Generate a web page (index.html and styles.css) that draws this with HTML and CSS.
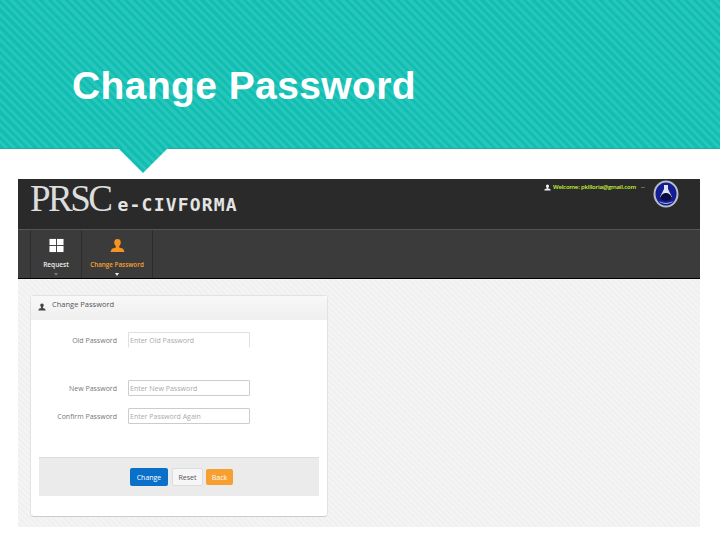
FILE: index.html
```html
<!DOCTYPE html>
<html lang="en">
<head>
  <meta charset="UTF-8" />
  <title>Change Password</title>
  <link rel="stylesheet" href="styles.css">
</head>
<body>
  <header class="banner">
    <h1>Change Password</h1>
    <div class="notch"></div>
  </header>

  <main class="shot">
    <div class="topbar">
      <div class="logo">
        <span class="logo-prsc">PRSC</span>
        <span class="logo-name">e-CIVFORMA</span>
      </div>
      <div class="welcome">
        <svg class="user-icon" viewBox="0 0 16 16"><path d="M8 1c2.500 0 3.500 1.700 3.500 3.700 0 1.600-.7 3-1.700 3.800v1.500L14 11.500 15.500 15H.5L2 11.500 6.200 10V8.500C5.200 7.700 4.500 6.300 4.500 4.700 4.500 2.700 5.500 1 8 1z"/></svg>
        <span>Welcome: pkllloria@gmail.com</span>
        <span class="caret-small"></span>
      </div>
      <svg class="seal" viewBox="0 0 26 28">
        <ellipse cx="13" cy="14" rx="12.500" ry="13.500" fill="#b9bec9"/>
        <ellipse cx="13" cy="14" rx="10.500" ry="11.500" fill="#141c96"/>
        <path d="M11 5h4v4l4 8c-1 3-11 3-12 0l4-8z" fill="#dfe4f0"/>
        <path d="M7 18c1.500-4 4-5 6-5s4.500 1 6 5c-2 3.500-10 3.500-12 0z" fill="#0a0c40"/>
        <path d="M6 21c3 2.500 11 2.500 14 0-2 3.500-12 3.500-14 0z" fill="#e8ecf4"/>
      </svg>
    </div>

    <nav class="menu">
      <div class="menu-item">
        <svg class="menu-icon" viewBox="0 0 16 16" fill="#fff"><rect x="0.500" y="1" width="7" height="6.500"/><rect x="8.500" y="1" width="7" height="6.500"/><rect x="0.500" y="8.500" width="7" height="6.500"/><rect x="8.500" y="8.500" width="7" height="6.500"/></svg>
        <span>Request</span>
        <i class="caret caret-dim"></i>
      </div>
      <div class="menu-item active">
        <svg class="menu-icon" viewBox="0 0 16 16" fill="#f7931e"><path d="M8 1c2.500 0 3.500 1.700 3.500 3.700 0 1.600-.7 3-1.700 3.800v1.500L14 11.500 15.500 15H.5L2 11.500 6.200 10V8.500C5.200 7.700 4.500 6.300 4.500 4.700 4.500 2.700 5.500 1 8 1z"/></svg>
        <span>Change Password</span>
        <i class="caret"></i>
      </div>
    </nav>

    <section class="content">
      <div class="card">
        <div class="card-head">
          <svg class="head-icon" viewBox="0 0 16 16"><path d="M8 1c2.500 0 3.500 1.700 3.500 3.700 0 1.600-.7 3-1.700 3.800v1.500L14 11.500 15.500 15H.5L2 11.500 6.200 10V8.500C5.200 7.700 4.500 6.300 4.500 4.700 4.500 2.700 5.500 1 8 1z"/></svg>
          <span>Change Password</span>
        </div>
        <form class="card-body">
          <div class="row row-old">
            <label>Old Password</label>
            <input type="text" placeholder="Enter Old Password" />
          </div>
          <div class="row row-new">
            <label>New Password</label>
            <input type="text" placeholder="Enter New Password" />
          </div>
          <div class="row row-confirm">
            <label>Confirm Password</label>
            <input type="text" placeholder="Enter Password Again" />
          </div>
          <div class="actions">
            <button type="button" class="btn btn-blue">Change</button>
            <button type="button" class="btn btn-plain">Reset</button>
            <button type="button" class="btn btn-orange">Back</button>
          </div>
        </form>
      </div>
    </section>
  </main>
</body>
</html>
```

FILE: styles.css
```css
body {
  margin: 0;
  height: 540px;
  overflow: hidden;
  background: #fff;
  font-family: "Open Sans", "Liberation Sans", sans-serif;
}
.banner {
  position: relative;
  height: 149px;
  padding-left: 72px;
  box-sizing: border-box;
  background: repeating-linear-gradient(45deg, #12beb2 0, #12beb2 3px, #27c6bb 3px, #27c6bb 6px);
  border-bottom: 1px solid #2aa99f;
}
.banner h1 {
  margin: 0;
  padding-top: 64px;
  font: bold 39px/44px "Liberation Sans", Arial, sans-serif;
  letter-spacing: 0.4px;
  color: #fff;
}
.notch {
  position: absolute;
  left: 118px;
  top: 148px;
  width: 50px;
  height: 25px;
  background: repeating-linear-gradient(45deg, #12beb2 0, #12beb2 3px, #27c6bb 3px, #27c6bb 6px);
  clip-path: polygon(0 0, 100% 0, 50% 100%);
}
.shot {
  width: 682px;
  height: 348px;
  margin: 30px 0 0 18px;
  display: flex;
  flex-direction: column;
}
.topbar {
  height: 50px;
  background: #2a2a2a;
  display: flex;
  align-items: flex-start;
  flex-shrink: 0;
}
.logo {
  display: flex;
  align-items: baseline;
  padding-left: 12px;
}
.logo-prsc {
  font: 37px/40px "Liberation Serif", serif;
  letter-spacing: -2.500px;
  color: #ddd;
}
.logo-name {
  margin-left: 7px;
  font: bold 18px/20px "DejaVu Sans Mono", monospace;
  letter-spacing: 1.200px;
  color: #e4e4e4;
}
.welcome {
  margin: 3px 0 0 auto;
  display: flex;
  align-items: center;
  gap: 2px;
  font-size: 6px;
  font-weight: 600;
  letter-spacing: -0.2px;
  line-height: 10px;
  color: #c6f53a;
}
.user-icon {
  width: 7px;
  height: 7px;
  fill: #eee;
}
.caret-small {
  width: 4px;
  height: 1px;
  margin-left: 3px;
  background: #666;
}
.seal {
  width: 26px;
  height: 28px;
  margin: 1px 21px 0 8px;
}
.menu {
  height: 50px;
  flex-shrink: 0;
  box-sizing: border-box;
  padding-left: 12px;
  display: flex;
  background: #3b3b3b;
  border-top: 1px solid #555;
  border-bottom: 1px solid #000;
}
.menu-item {
  box-sizing: border-box;
  height: 48px;
  padding-top: 8px;
  display: flex;
  flex-direction: column;
  align-items: center;
  border-left: 1px solid #2c2c2c;
  font-size: 6.500px;
  font-weight: 600;
  line-height: 10px;
  color: #eee;
}
.menu-item:first-child {
  width: 51px;
}
.menu-item.active {
  width: 72px;
  font-size: 6.300px;
  color: #f7a035;
  border-right: 1px solid #2c2c2c;
}
.menu-icon {
  width: 15px;
  height: 15px;
  margin-bottom: 7px;
}
.caret {
  width: 0;
  height: 0;
  margin-top: 3px;
  border-left: 2.500px solid transparent;
  border-right: 2.500px solid transparent;
  border-top: 3px solid #eee;
}
.caret-dim {
  border-top-color: #777;
}
.content {
  flex: 1;
  min-height: 0;
  padding: 16px 0 0 12px;
  background: repeating-linear-gradient(45deg, #f4f4f4 0, #f4f4f4 2px, #f0f0f0 2px, #f0f0f0 4px);
}
.card {
  width: 298px;
  height: 222px;
  box-sizing: border-box;
  display: flex;
  flex-direction: column;
  background: #fff;
  border: 1px solid #e2e2e2;
  border-bottom-color: #ccc;
  border-radius: 4px;
}
.card-head {
  height: 24px;
  flex-shrink: 0;
  box-sizing: border-box;
  padding: 3px 0 0 7px;
  display: flex;
  align-items: flex-start;
  gap: 6px;
  background: linear-gradient(#f8f8f8, #efefef);
  font-size: 7.500px;
  line-height: 10px;
  color: #555;
}
.head-icon {
  width: 8px;
  height: 8px;
  margin-top: 4px;
  fill: #444;
}
.card-body {
  flex: 1;
  display: flex;
  flex-direction: column;
}
.row {
  display: flex;
  align-items: center;
  gap: 11px;
}
.row label {
  width: 86px;
  text-align: right;
  font-size: 7px;
  color: #777;
}
.row input {
  width: 122px;
  height: 16px;
  box-sizing: border-box;
  padding: 0 1px;
  border: 1px solid #ccc;
  border-radius: 1px;
  font: 7px "Open Sans", "Liberation Sans", sans-serif;
}
.row input::placeholder {
  color: #aaa;
}
.row-old {
  margin-top: 12px;
}
.row-old input {
  border-color: #e0e0e0;
  border-bottom-color: transparent;
}
.row-new {
  margin-top: 32px;
}
.row-confirm {
  margin-top: 12px;
}
.actions {
  height: 39px;
  margin: 33px 8px 0;
  box-sizing: border-box;
  border-top: 1px solid #ddd;
  background: #ebebeb;
  display: flex;
  justify-content: center;
  align-items: center;
  gap: 3px;
  padding-left: 5px;
}
.btn {
  height: 18px;
  padding: 0;
  border: 1px solid transparent;
  border-radius: 2px;
  font: 7px "Open Sans", "Liberation Sans", sans-serif;
}
.btn-blue {
  width: 38px;
  margin-right: 1px;
  background: #0a6fc8;
  color: #fff;
}
.btn-plain {
  width: 31px;
  background: #f6f6f6;
  border-color: #ddd;
  color: #555;
}
.btn-orange {
  width: 27px;
  height: 16px;
  background: #f7a030;
  color: #fff;
}
```
